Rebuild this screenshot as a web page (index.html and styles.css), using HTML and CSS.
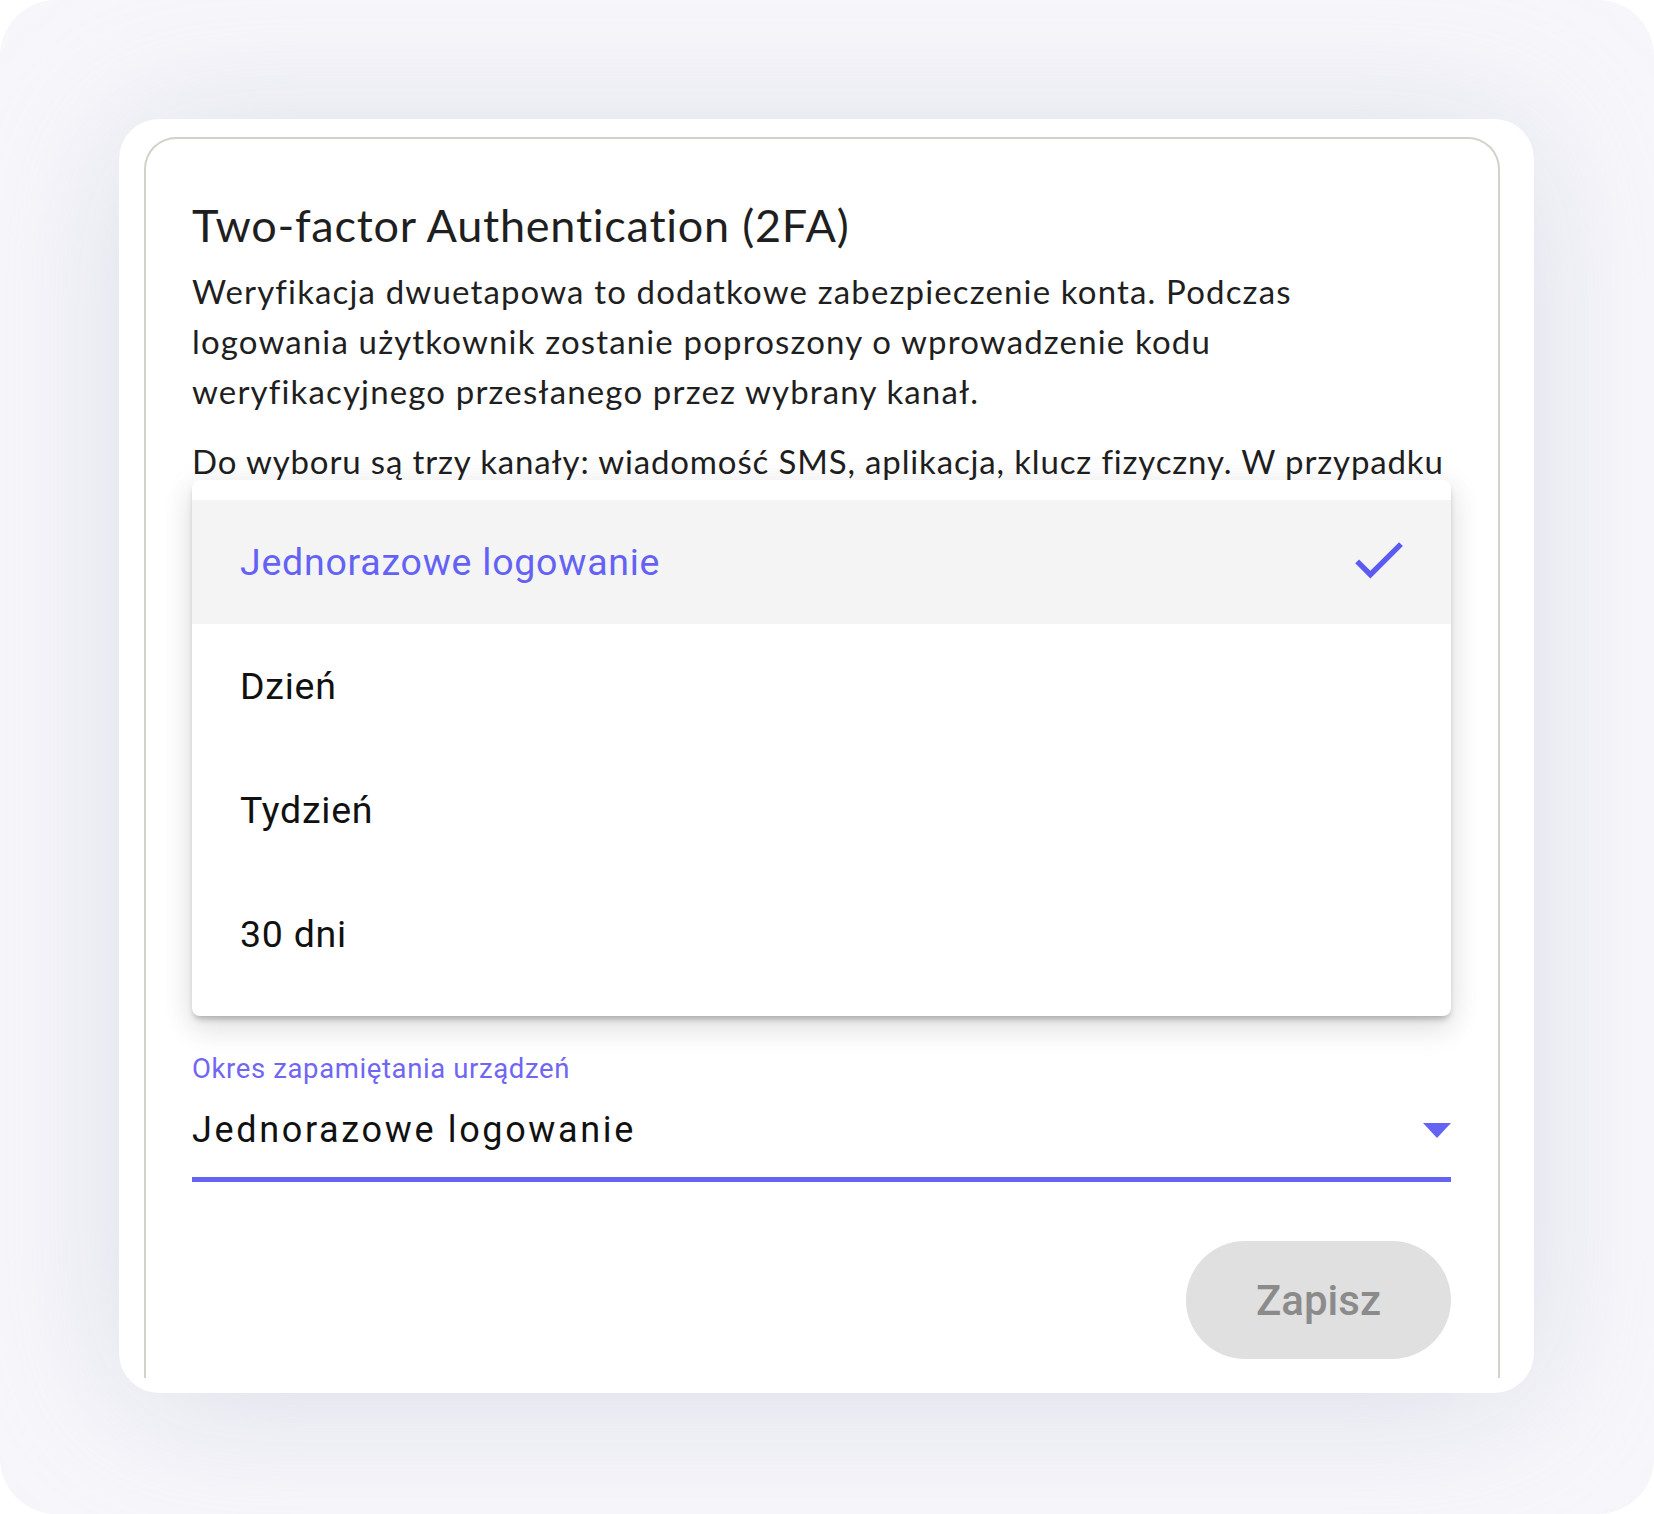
FILE: index.html
```html
<!DOCTYPE html>
<html lang="pl">
<head>
<meta charset="utf-8">
<title>Two-factor Authentication (2FA)</title>
<link rel="stylesheet" href="styles.css">
</head>
<body>
<div class="screen">
  <div class="frame">
    <div class="viewport">
      <section class="card">
        <h2 class="title">Two-factor Authentication (2FA)</h2>
        <div class="desc">
          <p>Weryfikacja dwuetapowa to dodatkowe zabezpieczenie konta. Podczas logowania użytkownik zostanie poproszony o wprowadzenie kodu weryfikacyjnego przesłanego przez wybrany kanał.</p>
          <p class="clamp">Do wyboru są trzy kanały: wiadomość SMS, aplikacja, klucz fizyczny. W przypadku wyboru wiadomości SMS kod weryfikacyjny zostanie wysłany na numer telefonu przypisany do konta użytkownika. W przypadku wyboru aplikacji należy zeskanować kod QR w aplikacji uwierzytelniającej, na przykład Google Authenticator lub Microsoft Authenticator, a następnie przepisać wygenerowany kod. Klucz fizyczny należy podłączyć do urządzenia i potwierdzić logowanie dotykiem. Po pomyślnej weryfikacji urządzenie może zostać zapamiętane, dzięki czemu przy kolejnych logowaniach z tego samego urządzenia nie będzie konieczne ponowne podawanie kodu. Poniżej można określić, jak długo urządzenie ma być zapamiętane. Wybór opcji jednorazowego logowania oznacza, że kod będzie wymagany przy każdym logowaniu. Zmiany zostaną zastosowane po kliknięciu przycisku zapisu i obowiązują dla wszystkich użytkowników organizacji.</p>
        </div>

        <div class="field">
          <label class="field-label">Okres zapamiętania urządzeń</label>
          <div class="field-input">
            <span class="field-value">Jednorazowe logowanie</span>
            <span class="field-arrow"></span>
          </div>
        </div>

        <div class="actions">
          <button class="btn-save" disabled>Zapisz</button>
        </div>

        <ul class="menu">
          <li class="menu-item selected">
            <span>Jednorazowe logowanie</span>
            <svg class="check" viewBox="0 0 24 24" width="65" height="65"><path d="M9 16.17L4.83 12l-1.42 1.41L9 19 21 7l-1.41-1.41z" fill="currentColor"/></svg>
          </li>
          <li class="menu-item"><span>Dzień</span></li>
          <li class="menu-item"><span>Tydzień</span></li>
          <li class="menu-item"><span>30 dni</span></li>
        </ul>
      </section>
    </div>
  </div>
</div>
</body>
</html>
```

FILE: styles.css
```css
* { box-sizing: border-box; }

html, body {
  margin: 0;
  padding: 0;
  background: #ffffff;
}

.screen {
  width: 1654px;
  height: 1514px;
  border-radius: 56px;
  background: #f7f7fb;
  padding: 119px 120px 121px 119px;
  overflow: hidden;
}

.frame {
  width: 1415px;
  height: 1274px;
  background: #ffffff;
  border-radius: 40px;
  box-shadow: 0 10px 150px rgba(175, 175, 205, 0.38);
  padding: 18px 34px 15px 25px;
}

.viewport {
  height: 100%;
  overflow: hidden;
}

.card {
  position: relative;
  border: 2px solid #d2d2cb;
  border-bottom: none;
  border-radius: 32px 32px 0 0;
  padding: 59px 47px 80px 46px;
  font-family: "Lato", "Noto Sans", sans-serif;
  color: #1f1f1f;
}

.title {
  margin: 0;
  font-size: 45px;
  line-height: 54px;
  font-weight: 400;
  letter-spacing: 0.75px;
}

.desc {
  margin-top: 14px;
}

.desc p {
  margin: 0 0 20px;
  font-size: 33px;
  line-height: 50px;
  letter-spacing: 1.15px;
}

.desc p.clamp {
  margin-bottom: 0;
  letter-spacing: 0.85px;
  display: -webkit-box;
  -webkit-box-orient: vertical;
  -webkit-line-clamp: 11;
  overflow: hidden;
  height: 550px;
}

.field {
  margin-top: 67px;
  font-family: "Roboto", sans-serif;
}

.field-label {
  display: block;
  font-size: 27.5px;
  line-height: 32px;
  letter-spacing: 0.62px;
  color: #7066f3;
}

.field-input {
  display: flex;
  align-items: center;
  justify-content: space-between;
  margin-top: 23px;
  padding-bottom: 25px;
  border-bottom: 5px solid #6563f3;
}

.field-value {
  font-size: 36px;
  line-height: 44px;
  letter-spacing: 2.65px;
  color: #111111;
}

.field-arrow {
  width: 0;
  height: 0;
  border-left: 14px solid transparent;
  border-right: 14px solid transparent;
  border-top: 15px solid #6563f3;
}

.actions {
  display: flex;
  justify-content: flex-end;
  margin-top: 59px;
}

.btn-save {
  width: 265px;
  height: 118px;
  border: none;
  border-radius: 59px;
  background: #e0e0e0;
  color: #8b8b8b;
  font-family: "Roboto", sans-serif;
  font-weight: 500;
  font-size: 42px;
  letter-spacing: 0;
  padding: 0;
}

.menu {
  position: absolute;
  left: 46px;
  top: 341px;
  width: 1259px;
  margin: 0;
  padding: 20px 0;
  list-style: none;
  background: #ffffff;
  border-radius: 8px;
  box-shadow: 0 5px 6px -2px rgba(0, 0, 0, 0.26), 0 14px 30px 2px rgba(0, 0, 0, 0.08), 0 4px 30px 4px rgba(0, 0, 0, 0.06);
  font-family: "Roboto", sans-serif;
}

.menu-item {
  display: flex;
  align-items: center;
  justify-content: space-between;
  height: 124px;
  padding: 0 40px 0 48px;
  font-size: 37.5px;
  letter-spacing: 0.75px;
  color: #111111;
}

.menu-item.selected {
  background: #f4f4f4;
  color: #6462f4;
}

.check {
  display: block;
  margin-top: -6px;
  color: #5b5bf2;
}
```
